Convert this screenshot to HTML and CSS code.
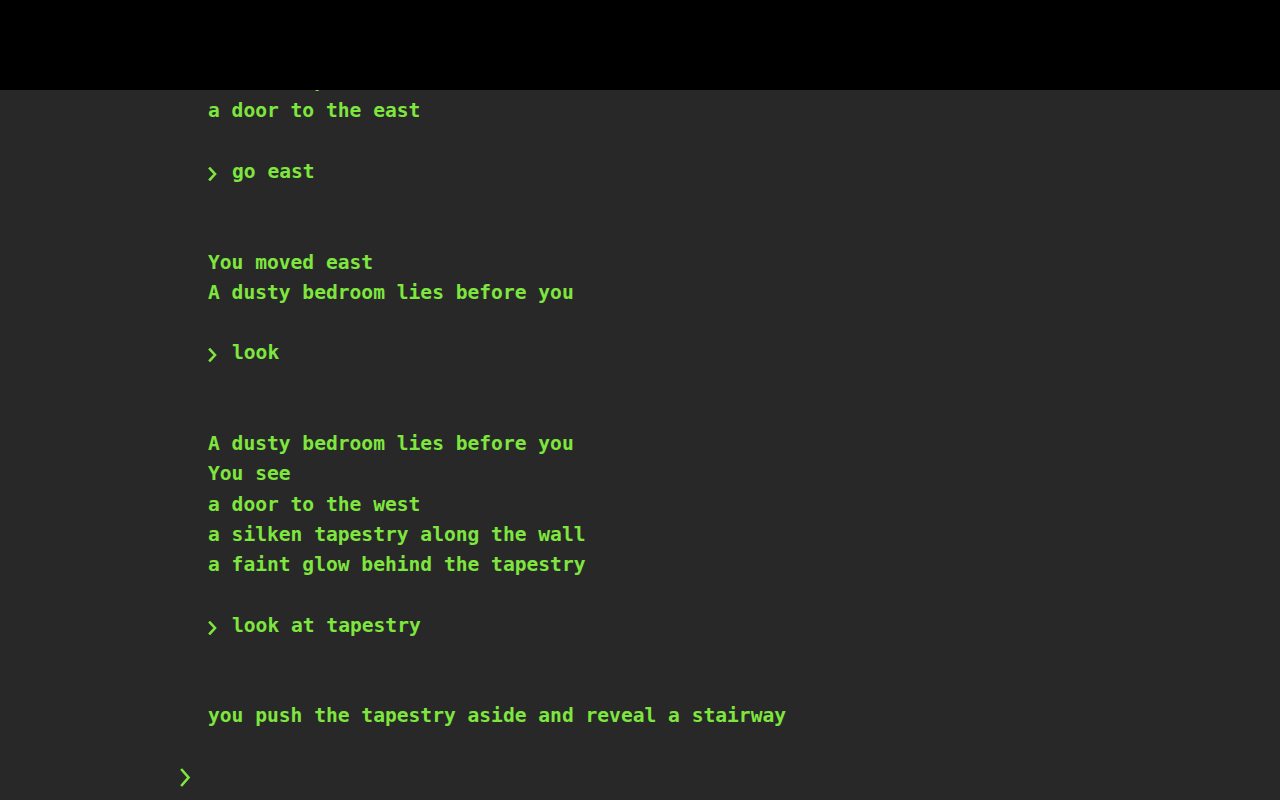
FILE: index.html
```html
<!DOCTYPE html>
<html lang="en">
<head>
<meta charset="utf-8">
<title>Text Adventure</title>
<link rel="stylesheet" href="styles.css">
</head>
<body>
<header class="topbar"></header>
<main class="terminal">
  <div class="log">
    <div class="output">
      <p>You wake up in a narrow hallway</p>
    </div>
    <div class="command"><svg class="caret" viewBox="0 0 8 14" aria-hidden="true"><polyline points="1.5,1.5 6.5,7 1.5,12.5"/></svg><span class="cmd">look</span></div>
    <div class="output">
      <p>A narrow hallway stretches ahead</p>
      <p>You see</p>
      <p>a torn map</p>
      <p>a door to the east</p>
    </div>
    <div class="command"><svg class="caret" viewBox="0 0 8 14" aria-hidden="true"><polyline points="1.5,1.5 6.5,7 1.5,12.5"/></svg><span class="cmd">go east</span></div>
    <div class="output">
      <p>You moved east</p>
      <p>A dusty bedroom lies before you</p>
    </div>
    <div class="command"><svg class="caret" viewBox="0 0 8 14" aria-hidden="true"><polyline points="1.5,1.5 6.5,7 1.5,12.5"/></svg><span class="cmd">look</span></div>
    <div class="output">
      <p>A dusty bedroom lies before you</p>
      <p>You see</p>
      <p>a door to the west</p>
      <p>a silken tapestry along the wall</p>
      <p>a faint glow behind the tapestry</p>
    </div>
    <div class="command"><svg class="caret" viewBox="0 0 8 14" aria-hidden="true"><polyline points="1.5,1.5 6.5,7 1.5,12.5"/></svg><span class="cmd">look at tapestry</span></div>
    <div class="output">
      <p>you push the tapestry aside and reveal a stairway</p>
    </div>
  </div>
  <div class="input-row"><svg class="prompt" viewBox="0 0 11 19" aria-hidden="true"><polyline points="2,2 8.5,9.5 2,17"/></svg><span class="input"></span></div>
</main>
</body>
</html>
```

FILE: styles.css
```css
* { box-sizing: border-box; }
html, body {
  margin: 0;
  height: 100%;
  overflow: hidden;
  background: #282828;
}
body {
  font-family: "DejaVu Sans Mono", "Liberation Mono", monospace;
  font-weight: bold;
  font-size: 19.6px;
  line-height: 30.25px;
  color: #7ee63e;
}
.topbar {
  position: fixed;
  top: 0;
  left: 0;
  right: 0;
  height: 90px;
  background: #000;
  z-index: 2;
}
.terminal {
  height: 800px;
  display: flex;
  flex-direction: column;
  justify-content: flex-end;
  padding: 0 0 8px 180px;
}
.log {
  flex: none;
  padding-left: 28px;
  display: flex;
  flex-direction: column;
}
.output p {
  margin: 0;
  white-space: pre;
}
.output {
  flex: none;
  margin-bottom: 30.25px;
}
.command {
  flex: none;
  margin-bottom: 60.5px;
  white-space: pre;
  display: flex;
  align-items: center;
  gap: 15px;
  height: 30.25px;
}
.log > .output:last-child {
  margin-bottom: 30.25px;
}
.caret {
  width: 9px;
  height: 14px;
  margin-top: 4px;
  flex: none;
}
.caret polyline,
.prompt polyline {
  fill: none;
  stroke: #7ee63e;
  stroke-width: 2.6;
  stroke-linecap: square;
  stroke-linejoin: miter;
}
.prompt {
  flex: none;
  width: 11px;
  height: 19px;
  margin-top: 2px;
}
.input-row {
  flex: none;
  height: 30.25px;
  display: flex;
  align-items: center;
}
```
